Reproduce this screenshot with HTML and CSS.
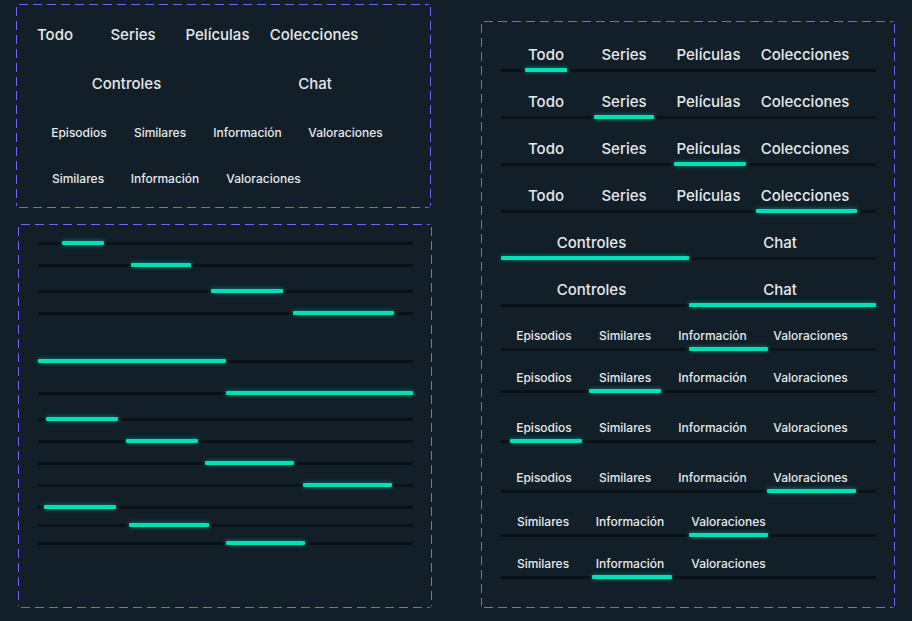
FILE: index.html
```html
<!DOCTYPE html>
<html lang="es">
<head>
<meta charset="utf-8">
<title>Tabs</title>
<link rel="stylesheet" href="styles.css">
</head>
<body>
<div class="canvas">
  <div class="col-left">
    <section class="frame frame-labels">
      <div class="tabs tabs-lg tabs-offset">
        <div class="labels"><span class="tab">Todo</span><span class="tab">Series</span><span class="tab">Películas</span><span class="tab">Colecciones</span></div>
      </div>
      <div class="tabs tabs-duo">
        <div class="labels"><span class="tab">Controles</span><span class="tab">Chat</span></div>
      </div>
      <div class="tabs tabs-s4">
        <div class="labels"><span class="tab">Episodios</span><span class="tab">Similares</span><span class="tab">Información</span><span class="tab">Valoraciones</span></div>
      </div>
      <div class="tabs tabs-s3">
        <div class="labels"><span class="tab">Similares</span><span class="tab">Información</span><span class="tab">Valoraciones</span></div>
      </div>
    </section>

    <section class="frame frame-tracks">
      <div class="track"><div class="indicator" style="left:24px;width:42px"></div></div>
      <div class="track"><div class="indicator" style="left:93px;width:60px"></div></div>
      <div class="track"><div class="indicator" style="left:173px;width:72px"></div></div>
      <div class="track"><div class="indicator" style="left:255px;width:101px"></div></div>
      <div class="track"><div class="indicator" style="left:0px;width:188px"></div></div>
      <div class="track"><div class="indicator" style="left:188px;width:187px"></div></div>
      <div class="track"><div class="indicator" style="left:8px;width:72px"></div></div>
      <div class="track"><div class="indicator" style="left:88px;width:72px"></div></div>
      <div class="track"><div class="indicator" style="left:167px;width:89px"></div></div>
      <div class="track"><div class="indicator" style="left:265px;width:89px"></div></div>
      <div class="track"><div class="indicator" style="left:6px;width:72px"></div></div>
      <div class="track"><div class="indicator" style="left:91px;width:80px"></div></div>
      <div class="track"><div class="indicator" style="left:188px;width:79px"></div></div>
    </section>
  </div>

  <section class="frame frame-full">
    <div class="tabs tabs-lg">
      <div class="labels"><span class="tab">Todo</span><span class="tab">Series</span><span class="tab">Películas</span><span class="tab">Colecciones</span></div>
      <div class="track"><div class="indicator" style="left:24px;width:42px"></div></div>
    </div>
    <div class="tabs tabs-lg">
      <div class="labels"><span class="tab">Todo</span><span class="tab">Series</span><span class="tab">Películas</span><span class="tab">Colecciones</span></div>
      <div class="track"><div class="indicator" style="left:93px;width:60px"></div></div>
    </div>
    <div class="tabs tabs-lg">
      <div class="labels"><span class="tab">Todo</span><span class="tab">Series</span><span class="tab">Películas</span><span class="tab">Colecciones</span></div>
      <div class="track"><div class="indicator" style="left:173px;width:72px"></div></div>
    </div>
    <div class="tabs tabs-lg">
      <div class="labels"><span class="tab">Todo</span><span class="tab">Series</span><span class="tab">Películas</span><span class="tab">Colecciones</span></div>
      <div class="track"><div class="indicator" style="left:255px;width:101px"></div></div>
    </div>
    <div class="tabs tabs-duo">
      <div class="labels"><span class="tab">Controles</span><span class="tab">Chat</span></div>
      <div class="track"><div class="indicator" style="left:0px;width:188px"></div></div>
    </div>
    <div class="tabs tabs-duo">
      <div class="labels"><span class="tab">Controles</span><span class="tab">Chat</span></div>
      <div class="track"><div class="indicator" style="left:188px;width:187px"></div></div>
    </div>
    <div class="tabs tabs-s4">
      <div class="labels"><span class="tab">Episodios</span><span class="tab">Similares</span><span class="tab">Información</span><span class="tab">Valoraciones</span></div>
      <div class="track"><div class="indicator" style="left:188px;width:79px"></div></div>
    </div>
    <div class="tabs tabs-s4">
      <div class="labels"><span class="tab">Episodios</span><span class="tab">Similares</span><span class="tab">Información</span><span class="tab">Valoraciones</span></div>
      <div class="track"><div class="indicator" style="left:88px;width:72px"></div></div>
    </div>
    <div class="tabs tabs-s4">
      <div class="labels"><span class="tab">Episodios</span><span class="tab">Similares</span><span class="tab">Información</span><span class="tab">Valoraciones</span></div>
      <div class="track"><div class="indicator" style="left:9px;width:72px"></div></div>
    </div>
    <div class="tabs tabs-s4">
      <div class="labels"><span class="tab">Episodios</span><span class="tab">Similares</span><span class="tab">Información</span><span class="tab">Valoraciones</span></div>
      <div class="track"><div class="indicator" style="left:266px;width:89px"></div></div>
    </div>
    <div class="tabs tabs-s3">
      <div class="labels"><span class="tab">Similares</span><span class="tab">Información</span><span class="tab">Valoraciones</span></div>
      <div class="track"><div class="indicator" style="left:188px;width:79px"></div></div>
    </div>
    <div class="tabs tabs-s3">
      <div class="labels"><span class="tab">Similares</span><span class="tab">Información</span><span class="tab">Valoraciones</span></div>
      <div class="track"><div class="indicator" style="left:91px;width:80px"></div></div>
    </div>
  </section>
</div>
</body>
</html>
```

FILE: styles.css
```css
html, body {
  margin: 0;
  padding: 0;
  background: #121f28;
}

body {
  font-family: Inter, "Noto Sans", "Liberation Sans", sans-serif;
  color: #e6e9ec;
  -webkit-font-smoothing: antialiased;
}

.canvas {
  display: flex;
  align-items: flex-start;
  padding: 4px 0 0 16px;
}

.col-left {
  display: flex;
  flex-direction: column;
  width: 416px;
  flex: none;
}

/* dashed component-set frame */
.frame {
  box-sizing: border-box;
  flex: none;
  border-radius: 4px;
  background:
    linear-gradient(90deg, #7b61ff 9px, transparent 9px) 3px 0 / 14px 1px repeat-x,
    linear-gradient(90deg, #7b61ff 9px, transparent 9px) 3px 100% / 14px 1px repeat-x,
    linear-gradient(180deg, #7b61ff 9px, transparent 9px) 0 3px / 1px 14px repeat-y,
    linear-gradient(180deg, #7b61ff 9px, transparent 9px) 100% 3px / 1px 14px repeat-y;
  display: flex;
  flex-direction: column;
}

.frame-labels {
  width: 415px;
  height: 204px;
  padding: 17px 0 0 20px;
  gap: 21px;
}
.frame-labels .tabs:nth-child(3) {
  margin-top: 1px;
}

.frame-tracks {
  width: 414px;
  height: 384px;
  margin: 16px 0 0 2px;
  padding: 18px 0 0 20px;
}
.frame-tracks .track + .track { margin-top: 19px; }
.frame-tracks .track:nth-child(3) { margin-top: 23px; }
.frame-tracks .track:nth-child(5) { margin-top: 45px; }
.frame-tracks .track:nth-child(6) { margin-top: 29px; }
.frame-tracks .track:nth-child(7) { margin-top: 23px; }
.frame-tracks .track:nth-child(12),
.frame-tracks .track:nth-child(13) { margin-top: 15px; }

.frame-full {
  width: 414px;
  height: 587px;
  margin: 17px 0 0 49px;
  padding: 20px 0 0 20px;
  gap: 16px;
}
.frame-full .tabs:nth-child(8),
.frame-full .tabs:nth-child(12) { margin-top: -2px; }
.frame-full .tabs:nth-child(9),
.frame-full .tabs:nth-child(10) { margin-top: 6px; }

/* tab bar */
.tabs {
  width: 375px;
  flex: none;
}
.tabs-offset {
  margin-left: -26px;
}

.labels {
  display: flex;
  align-items: center;
  height: 28px;
  font-size: 15px;
  font-weight: 500;
  line-height: 28px;
}
.tabs-s4 .labels,
.tabs-s3 .labels {
  height: 25px;
  line-height: 25px;
  font-size: 12px;
}

.tab {
  box-sizing: border-box;
  flex: none;
  text-align: center;
  white-space: nowrap;
}

.tabs-lg .tab:nth-child(1) { margin-left: 24px; width: 42px; }
.tabs-lg .tab:nth-child(2) { margin-left: 27px; width: 60px; }
.tabs-lg .tab:nth-child(3) { margin-left: 20px; width: 72px; padding-right: 3px; }
.tabs-lg .tab:nth-child(4) { margin-left: 10px; width: 101px; padding-right: 3px; }

.tabs-duo .tab:nth-child(1) { width: 188px; padding-right: 7px; }
.tabs-duo .tab:nth-child(2) { width: 187px; padding-right: 5px; }

.tabs-s4 .tab:nth-child(1) { margin-left: 8px; width: 72px; padding-right: 2px; }
.tabs-s4 .tab:nth-child(2) { margin-left: 8px; width: 72px; }
.tabs-s4 .tab:nth-child(3) { margin-left: 7px; width: 89px; }
.tabs-s4 .tab:nth-child(4) { margin-left: 9px; width: 89px; }

.tabs-s3 .tab:nth-child(1) { margin-left: 6px; width: 72px; }
.tabs-s3 .tab:nth-child(2) { margin-left: 13px; width: 80px; padding-right: 4px; }
.tabs-s3 .tab:nth-child(3) { margin-left: 17px; width: 79px; }

.track {
  position: relative;
  width: 375px;
  height: 3px;
  background: #0a1217;
  flex: none;
}

.indicator {
  position: absolute;
  top: -1px;
  height: 4px;
  border-radius: 1px;
  background: #00e2b6;
  box-shadow: 0 0 4px rgba(0, 226, 182, 0.55);
}
```
